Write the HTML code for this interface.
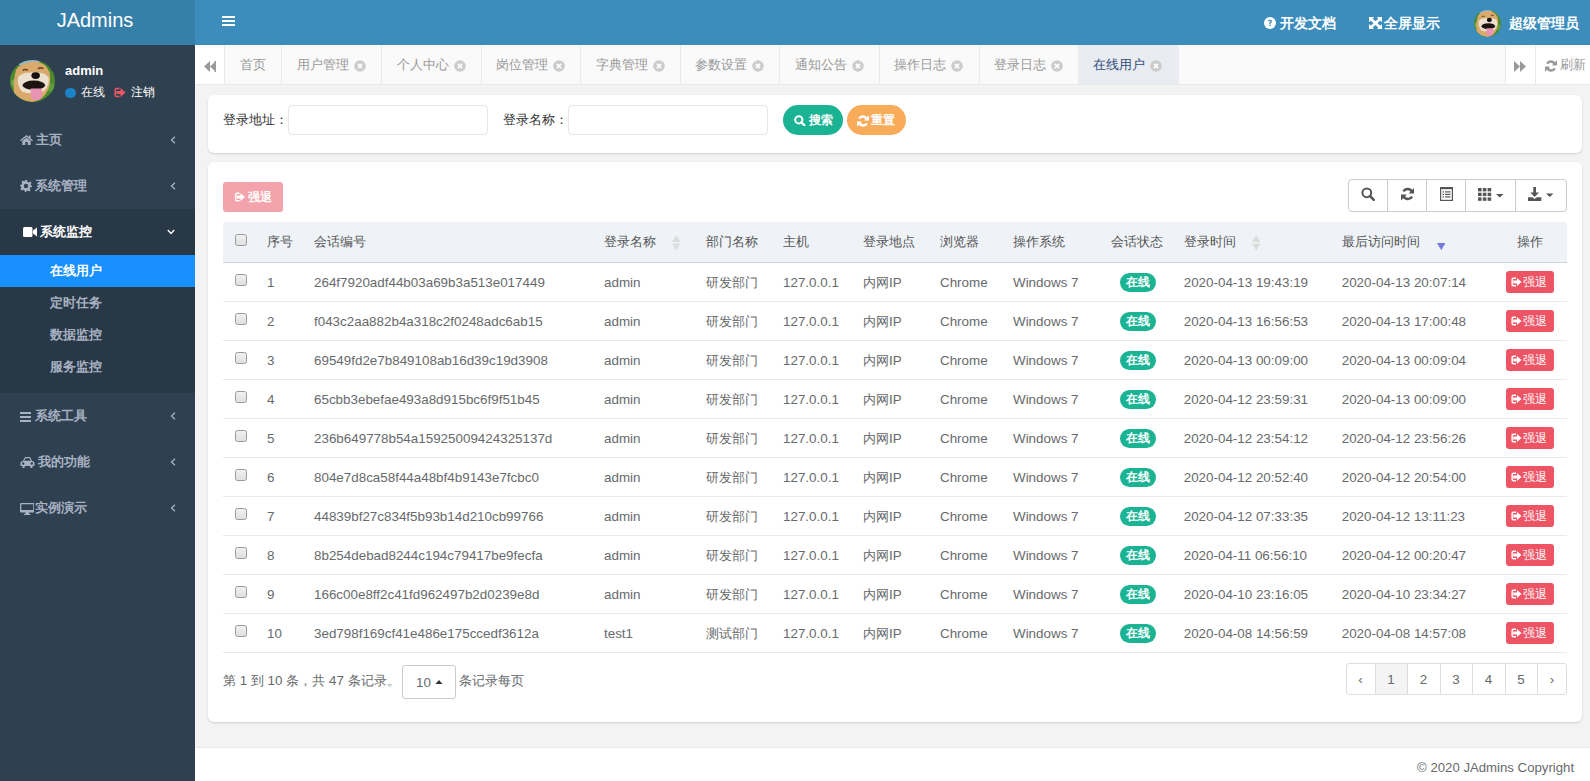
<!DOCTYPE html>
<html><head><meta charset="utf-8">
<style>
*{box-sizing:border-box;margin:0;padding:0}
html,body{width:1590px;height:781px;overflow:hidden}
body{font-family:"Liberation Sans",sans-serif;background:#f3f3f4;position:relative;color:#676a6c;font-size:13px}
.abs{position:absolute}
.logo{left:0;top:0;width:195px;height:45px;background:#367fa9;color:#fff;font-size:20px;line-height:41px;text-align:center;padding-right:5px}
.header{left:195px;top:0;width:1395px;height:45px;background:#3c8dbc;color:#fff}
.sidebar{left:0;top:45px;width:195px;height:736px;background:#2f4050}
.nav-item{position:absolute;left:0;width:195px;height:46px;color:#a7b1c2;font-weight:bold;font-size:13px}
.nav-item .txt{position:absolute;top:0;line-height:46px}
.sub{left:50px;width:145px;height:32px;line-height:32px;color:#a7b1c2;font-weight:bold;font-size:13px}
.tabs{left:195px;top:45px;width:1395px;height:40px;background:#fafafa;border-bottom:1px solid #e7eaec}
.tab{position:absolute;top:0;height:39px;border-right:1px solid #e7eaec;color:#999;line-height:39px;font-size:13px}
.htxt{top:14px;font-size:14px;font-weight:bold;line-height:18px;color:#fff;white-space:nowrap}
.ttxt{top:12px;font-size:13px;line-height:16px;color:#999;white-space:nowrap}
.lbl{top:17px;font-size:13px;line-height:16px;color:#333;white-space:nowrap}
.inp{top:10px;width:199.5px;height:30px;border:1px solid #e5e6e7;border-radius:4px;background:#fff}
.pill{top:10px;height:30px;border-radius:15px}
.ptxt{top:7px;font-size:12px;line-height:16px;color:#fff;font-weight:bold;white-space:nowrap}
.dbtn{border-radius:3px}
.tb{border:1px solid #ccc;border-radius:4px}
.cbx{width:12px;height:12px;border:1px solid #9a9a9a;border-radius:2.5px;background:linear-gradient(#f0f0f0,#e0e0e0)}
.th{font-size:13px;line-height:16px;color:#555;white-space:nowrap}
.td{font-size:13.4px;line-height:18px;color:#676a6c;white-space:nowrap}
.badge{width:36px;height:19px;border-radius:9.5px;background:#1ab394;color:#fff;font-weight:bold;font-size:12px;line-height:19px;text-align:center}
.rbtn{width:48px;height:22px;border-radius:3px;background:#ed5565}
.card{background:#fff;border-radius:6px;box-shadow:0 1px 2px rgba(0,0,0,.15)}
.footer{left:195px;top:747px;width:1395px;height:34px;background:#fff;border-top:1px solid #e7eaec}
</style></head><body>
<div class="abs logo">JAdmins</div>
<div class="abs header">
 <svg class="abs" style="left:27px;top:16px" width="13" height="10" viewBox="0 0 13 10"><rect y="0" width="13" height="2" fill="#fff"/><rect y="4" width="13" height="2" fill="#fff"/><rect y="8" width="13" height="2" fill="#fff"/></svg>
 <svg class="abs" style="left:1069px;top:16.5px" width="12" height="12" viewBox="0 0 12 12"><circle cx="6" cy="6" r="6" fill="#fff"/><path d="M4 4.6 Q4 2.6 6 2.6 Q8 2.6 8 4.3 Q8 5.3 6.9 5.9 Q6.6 6.1 6.6 6.9 H5.3 Q5.2 5.6 6 5.1 Q6.7 4.7 6.7 4.3 Q6.7 3.7 6 3.7 Q5.3 3.7 5.3 4.6 Z" fill="#3c8dbc"/><rect x="5.3" y="7.6" width="1.4" height="1.5" fill="#3c8dbc"/></svg>
 <div class="abs htxt" style="left:1085px">开发文档</div>
 <svg class="abs" style="left:1173.7px;top:16.8px" width="13" height="12.2" viewBox="0 0 13 12.2"><path d="M0 0 H5.3 L0 5.3 Z M13 0 V5.3 L7.7 0 Z M13 12.2 H7.7 L13 6.9 Z M0 12.2 V6.9 L5.3 12.2 Z" fill="#fff"/><path d="M1.5 1.5 L11.5 10.7 M11.5 1.5 L1.5 10.7" stroke="#fff" stroke-width="2.7"/></svg>
 <div class="abs htxt" style="left:1189px">全屏显示</div>
 <svg class="abs" style="left:1278.8px;top:10px" width="27" height="27" viewBox="0 0 100 100">
  <defs><clipPath id="av2"><circle cx="50" cy="50" r="50"/></clipPath></defs>
  <g clip-path="url(#av2)">
   <rect width="100" height="100" fill="#4d8a2c"/>
   <circle cx="12" cy="55" r="10" fill="#6aa84a"/><circle cx="90" cy="65" r="10" fill="#5f9e3c"/>
   <rect x="20" y="0" width="45" height="12" fill="#86b8e0"/>
   <path d="M14 22 Q26 4 55 3 Q80 6 88 30 Q92 55 84 72 Q76 94 50 100 Q22 98 9 78 Q6 50 14 22 Z" fill="#d9aa6c"/>
   <path d="M18 40 Q30 28 52 30 Q78 28 86 42 Q88 62 76 74 Q52 84 28 76 Q14 62 18 40 Z" fill="#ece0cf"/>
   <path d="M28 25 q6 -5 12 0 M62 21 q6 -5 12 0" stroke="#6a4420" stroke-width="3.5" fill="none"/>
   <ellipse cx="57" cy="37" rx="9.5" ry="8" fill="#141010"/>
   <ellipse cx="53" cy="60" rx="25" ry="11" fill="#1c1410"/>
   <path d="M46 68 H71 V84 Q71 96 58.5 96 Q46 96 46 84 Z" fill="#e993b4"/>
  </g>
 </svg>
 <div class="abs htxt" style="left:1314px">超级管理员</div>
</div>
<div class="abs sidebar">
 <svg class="abs" style="left:10px;top:15px" width="45" height="42" viewBox="0 0 100 100" preserveAspectRatio="none">
  <defs><clipPath id="av"><circle cx="50" cy="50" r="50"/></clipPath></defs>
  <g clip-path="url(#av)">
   <rect width="100" height="100" fill="#4d8a2c"/>
   <circle cx="12" cy="55" r="10" fill="#6aa84a"/><circle cx="90" cy="65" r="10" fill="#5f9e3c"/>
   <rect x="20" y="0" width="45" height="12" fill="#86b8e0"/>
   <path d="M14 22 Q26 4 55 3 Q80 6 88 30 Q92 55 84 72 Q76 94 50 100 Q22 98 9 78 Q6 50 14 22 Z" fill="#d9aa6c"/>
   <path d="M18 40 Q30 28 52 30 Q78 28 86 42 Q88 62 76 74 Q52 84 28 76 Q14 62 18 40 Z" fill="#ece0cf"/>
   <path d="M28 25 q6 -5 12 0 M62 21 q6 -5 12 0" stroke="#6a4420" stroke-width="3.5" fill="none"/>
   <ellipse cx="57" cy="37" rx="9.5" ry="8" fill="#141010"/>
   <ellipse cx="53" cy="60" rx="25" ry="11" fill="#1c1410"/>
   <path d="M46 68 H71 V84 Q71 96 58.5 96 Q46 96 46 84 Z" fill="#e993b4"/>
  </g>
 </svg>
 <div class="abs" style="left:65px;top:18px;color:#fff;font-weight:bold;font-size:13px;line-height:15px">admin</div>
 <div class="abs" style="left:65px;top:42.5px;width:10.5px;height:10.5px;border-radius:50%;background:#1c84c6"></div>
 <div class="abs" style="left:81px;top:39px;color:#fff;font-size:12px;line-height:16px">在线</div>
 <svg class="abs" style="left:113.5px;top:42px" width="12" height="11" viewBox="0 0 12 11"><path d="M5.5 1.4 H2.5 Q1.2 1.4 1.2 2.7 V8.3 Q1.2 9.6 2.5 9.6 H5.5" stroke="#ed5565" stroke-width="1.5" fill="none"/><path d="M2.4 3.9 H6.5 V1 L11.5 5.5 L6.5 10 V7.1 H2.4 Z" fill="#ed5565"/></svg>
 <div class="abs" style="left:131px;top:39px;color:#fff;font-size:12px;line-height:16px">注销</div>

 <div class="nav-item" style="top:71.5px">
  <svg class="abs" style="left:20px;top:18px" width="13" height="10" viewBox="0 0 13 10"><path d="M6.5 0 L0 5.3 L1 6.3 L6.5 1.8 L12 6.3 L13 5.3 L10.5 3.2 V0.5 H9 V2 Z M2.3 6 V10 H5.3 V7 H7.7 V10 H10.7 V6 L6.5 2.6 Z" fill="#a7b1c2"/></svg>
  <div class="txt" style="left:36px">主页</div>
  <svg class="abs" style="left:170px;top:19px" width="6" height="8" viewBox="0 0 6 8"><path d="M5 0.8 L1.5 4 L5 7.2" stroke="#a7b1c2" stroke-width="1.3" fill="none"/></svg>
 </div>
 <div class="nav-item" style="top:118px">
  <svg class="abs" style="left:20px;top:17px" width="12" height="12" viewBox="0 0 12 12"><path d="M5 0 H7 L7.4 1.8 L8.7 2.4 L10.3 1.4 L11.6 2.7 L10.6 4.3 L11.2 5.6 L12 5.9 V7.1 L10.2 7.5 L9.7 8.7 L10.6 10.3 L9.3 11.6 L7.7 10.6 L6.5 11.1 L6.1 12 H4.9 L4.5 10.2 L3.3 9.7 L1.7 10.6 L0.4 9.3 L1.4 7.7 L0.9 6.5 L0 6.1 V4.9 L1.8 4.5 L2.3 3.3 L1.4 1.7 L2.7 0.4 L4.3 1.4 L4.6 1.2 Z M6 3.8 A2.2 2.2 0 1 0 6 8.2 A2.2 2.2 0 1 0 6 3.8 Z" fill="#a7b1c2" fill-rule="evenodd"/></svg>
  <div class="txt" style="left:35px">系统管理</div>
  <svg class="abs" style="left:170px;top:19px" width="6" height="8" viewBox="0 0 6 8"><path d="M5 0.8 L1.5 4 L5 7.2" stroke="#a7b1c2" stroke-width="1.3" fill="none"/></svg>
 </div>
 <div class="abs" style="left:0;top:164px;width:195px;height:184px;background:#293846"></div>
 <div class="nav-item" style="top:164px;color:#fff">
  <svg class="abs" style="left:22.5px;top:18px" width="14" height="10" viewBox="0 0 14 10"><rect x="0" y="0" width="9.5" height="10" rx="1.5" fill="#fff"/><path d="M10 3.5 L14 0.5 V9.5 L10 6.5 Z" fill="#fff"/></svg>
  <div class="txt" style="left:39.5px">系统监控</div>
  <svg class="abs" style="left:167px;top:20px" width="8" height="6" viewBox="0 0 8 6"><path d="M0.8 1 L4 4.5 L7.2 1" stroke="#fff" stroke-width="1.3" fill="none"/></svg>
 </div>
 <div class="abs" style="left:0;top:210px;width:195px;height:32px;background:#1890ff"></div>
 <div class="abs sub" style="top:210px;color:#fff">在线用户</div>
 <div class="abs sub" style="top:242px">定时任务</div>
 <div class="abs sub" style="top:274px">数据监控</div>
 <div class="abs sub" style="top:306px">服务监控</div>

 <div class="nav-item" style="top:348px">
  <svg class="abs" style="left:19.7px;top:18.5px" width="11.5" height="10" viewBox="0 0 11.5 10"><rect y="0" width="11.5" height="2" fill="#a7b1c2"/><rect y="4" width="11.5" height="2" fill="#a7b1c2"/><rect y="8" width="11.5" height="2" fill="#a7b1c2"/></svg>
  <div class="txt" style="left:34.6px">系统工具</div>
  <svg class="abs" style="left:170px;top:19px" width="6" height="8" viewBox="0 0 6 8"><path d="M5 0.8 L1.5 4 L5 7.2" stroke="#a7b1c2" stroke-width="1.3" fill="none"/></svg>
 </div>
 <div class="nav-item" style="top:394px">
  <svg class="abs" style="left:19.7px;top:17.5px" width="15" height="11" viewBox="0 0 15 11"><path d="M3 4 L4.5 0.8 Q4.8 0 5.6 0 H9.4 Q10.2 0 10.5 0.8 L12 4 Q14 4.3 14.5 5.5 V9 H12.5 V10.5 Q12.5 11 12 11 H10.8 Q10.3 11 10.3 10.5 V9 H4.7 V10.5 Q4.7 11 4.2 11 H3 Q2.5 11 2.5 10.5 V9 H0.5 V5.5 Q1 4.3 3 4 Z M4.3 3.8 H10.7 L9.6 1.3 H5.4 Z M3.2 5.3 A1.2 1.2 0 1 0 3.2 7.7 A1.2 1.2 0 1 0 3.2 5.3 Z M11.8 5.3 A1.2 1.2 0 1 0 11.8 7.7 A1.2 1.2 0 1 0 11.8 5.3 Z" fill="#a7b1c2" fill-rule="evenodd"/></svg>
  <div class="txt" style="left:38.3px">我的功能</div>
  <svg class="abs" style="left:170px;top:19px" width="6" height="8" viewBox="0 0 6 8"><path d="M5 0.8 L1.5 4 L5 7.2" stroke="#a7b1c2" stroke-width="1.3" fill="none"/></svg>
 </div>
 <div class="nav-item" style="top:440px">
  <svg class="abs" style="left:19.7px;top:17.5px" width="14.5" height="12" viewBox="0 0 14.5 12"><path d="M1 0 H13.5 Q14.5 0 14.5 1 V8.5 Q14.5 9.5 13.5 9.5 H9 L9.3 11 H10.5 V12 H4 V11 H5.2 L5.5 9.5 H1 Q0 9.5 0 8.5 V1 Q0 0 1 0 Z M1.3 1.3 V7 H13.2 V1.3 Z" fill="#a7b1c2" fill-rule="evenodd"/></svg>
  <div class="txt" style="left:34.6px">实例演示</div>
  <svg class="abs" style="left:170px;top:19px" width="6" height="8" viewBox="0 0 6 8"><path d="M5 0.8 L1.5 4 L5 7.2" stroke="#a7b1c2" stroke-width="1.3" fill="none"/></svg>
 </div>
</div>
<div class="abs tabs">
<div class="abs" style="left:0;top:0;width:30px;height:39px;background:#fff;border-right:1px solid #e7eaec"></div>
<svg class="abs" style="left:9px;top:16px" width="12" height="11" viewBox="0 0 12 11"><path d="M6 0 V11 L0 5.5 Z M12 0 V11 L6 5.5 Z" fill="#999"/><rect x="10.6" y="0" width="1.4" height="11" fill="#999"/></svg>
<div class="tab" style="left:30.0px;width:57.0px;"></div>
<div class="abs ttxt" style="left:44.6px;">首页</div>
<div class="tab" style="left:87.0px;width:100.0px;"></div>
<div class="abs ttxt" style="left:101.6px;">用户管理</div>
<svg class="abs" style="left:158.6px;top:15px" width="12" height="12" viewBox="0 0 12 12"><circle cx="6" cy="6" r="5.8" fill="#ccc"/><path d="M3.9 3.9 L8.1 8.1 M8.1 3.9 L3.9 8.1" stroke="#fff" stroke-width="1.6"/></svg>
<div class="tab" style="left:187.0px;width:99.7px;"></div>
<div class="abs ttxt" style="left:201.6px;">个人中心</div>
<svg class="abs" style="left:258.6px;top:15px" width="12" height="12" viewBox="0 0 12 12"><circle cx="6" cy="6" r="5.8" fill="#ccc"/><path d="M3.9 3.9 L8.1 8.1 M8.1 3.9 L3.9 8.1" stroke="#fff" stroke-width="1.6"/></svg>
<div class="tab" style="left:286.7px;width:99.3px;"></div>
<div class="abs ttxt" style="left:301.3px;">岗位管理</div>
<svg class="abs" style="left:358.3px;top:15px" width="12" height="12" viewBox="0 0 12 12"><circle cx="6" cy="6" r="5.8" fill="#ccc"/><path d="M3.9 3.9 L8.1 8.1 M8.1 3.9 L3.9 8.1" stroke="#fff" stroke-width="1.6"/></svg>
<div class="tab" style="left:386.0px;width:99.6px;"></div>
<div class="abs ttxt" style="left:400.6px;">字典管理</div>
<svg class="abs" style="left:457.6px;top:15px" width="12" height="12" viewBox="0 0 12 12"><circle cx="6" cy="6" r="5.8" fill="#ccc"/><path d="M3.9 3.9 L8.1 8.1 M8.1 3.9 L3.9 8.1" stroke="#fff" stroke-width="1.6"/></svg>
<div class="tab" style="left:485.6px;width:99.4px;"></div>
<div class="abs ttxt" style="left:500.2px;">参数设置</div>
<svg class="abs" style="left:557.2px;top:15px" width="12" height="12" viewBox="0 0 12 12"><circle cx="6" cy="6" r="5.8" fill="#ccc"/><path d="M3.9 3.9 L8.1 8.1 M8.1 3.9 L3.9 8.1" stroke="#fff" stroke-width="1.6"/></svg>
<div class="tab" style="left:585.0px;width:99.6px;"></div>
<div class="abs ttxt" style="left:599.6px;">通知公告</div>
<svg class="abs" style="left:656.6px;top:15px" width="12" height="12" viewBox="0 0 12 12"><circle cx="6" cy="6" r="5.8" fill="#ccc"/><path d="M3.9 3.9 L8.1 8.1 M8.1 3.9 L3.9 8.1" stroke="#fff" stroke-width="1.6"/></svg>
<div class="tab" style="left:684.6px;width:100.0px;"></div>
<div class="abs ttxt" style="left:699.2px;">操作日志</div>
<svg class="abs" style="left:756.2px;top:15px" width="12" height="12" viewBox="0 0 12 12"><circle cx="6" cy="6" r="5.8" fill="#ccc"/><path d="M3.9 3.9 L8.1 8.1 M8.1 3.9 L3.9 8.1" stroke="#fff" stroke-width="1.6"/></svg>
<div class="tab" style="left:784.6px;width:99.0px;"></div>
<div class="abs ttxt" style="left:799.2px;">登录日志</div>
<svg class="abs" style="left:856.2px;top:15px" width="12" height="12" viewBox="0 0 12 12"><circle cx="6" cy="6" r="5.8" fill="#ccc"/><path d="M3.9 3.9 L8.1 8.1 M8.1 3.9 L3.9 8.1" stroke="#fff" stroke-width="1.6"/></svg>
<div class="tab" style="left:883.6px;width:100.0px;background:#e9edf2;"></div>
<div class="abs ttxt" style="left:898.2px;color:#2f4b7c;">在线用户</div>
<svg class="abs" style="left:955.2px;top:15px" width="12" height="12" viewBox="0 0 12 12"><circle cx="6" cy="6" r="5.8" fill="#ccc"/><path d="M3.9 3.9 L8.1 8.1 M8.1 3.9 L3.9 8.1" stroke="#fff" stroke-width="1.6"/></svg>
<div class="abs" style="left:1310px;top:0;width:85px;height:39px;background:#fff;border-left:1px solid #e7eaec"></div>
<div class="abs" style="left:1340px;top:0;width:1px;height:39px;background:#e7eaec"></div>
<svg class="abs" style="left:1319px;top:16px" width="12" height="11" viewBox="0 0 12 11"><path d="M0 0 V11 L6 5.5 Z M6 0 V11 L12 5.5 Z" fill="#999"/></svg>
<svg class="abs" style="left:1350px;top:14.5px" width="12" height="12" viewBox="0 0 12 12"><path d="M9.9 4.6 A4.3 4.3 0 0 0 2.1 3.6" stroke="#999" stroke-width="2.4" fill="none"/><path d="M12 0.3 V5.5 H6.8 Z" fill="#999"/><path d="M2.1 7.4 A4.3 4.3 0 0 0 9.9 8.4" stroke="#999" stroke-width="2.4" fill="none"/><path d="M0 11.7 V6.5 H5.2 Z" fill="#999"/></svg>
<div class="abs ttxt" style="left:1365px">刷新</div>
</div>
<div class="abs card" style="left:208px;top:95px;width:1374px;height:58px">
 <div class="abs lbl" style="left:14.5px">登录地址：</div>
 <div class="abs inp" style="left:80px"></div>
 <div class="abs lbl" style="left:294.5px">登录名称：</div>
 <div class="abs inp" style="left:360px"></div>
 <div class="abs pill" style="left:575px;width:60px;background:#1ab394">
  <svg class="abs" style="left:11px;top:9.5px" width="12" height="11" viewBox="0 0 12 11"><circle cx="4.8" cy="4.8" r="3.6" stroke="#fff" stroke-width="2" fill="none"/><path d="M7.3 7.3 L10.5 10.3" stroke="#fff" stroke-width="2.3" stroke-linecap="round"/></svg>
  <div class="abs ptxt" style="left:25.5px">搜索</div>
 </div>
 <div class="abs pill" style="left:639px;width:59px;background:#f8ac59">
  <svg class="abs" style="left:9.5px;top:9.5px" width="12" height="12" viewBox="0 0 12 12"><path d="M9.9 4.6 A4.3 4.3 0 0 0 2.1 3.6" stroke="#fff" stroke-width="2.4" fill="none"/><path d="M12 0.3 V5.5 H6.8 Z" fill="#fff"/><path d="M2.1 7.4 A4.3 4.3 0 0 0 9.9 8.4" stroke="#fff" stroke-width="2.4" fill="none"/><path d="M0 11.7 V6.5 H5.2 Z" fill="#fff"/></svg>
  <div class="abs ptxt" style="left:24px">重置</div>
 </div>
</div>
<div class="abs card" style="left:208px;top:162px;width:1374px;height:560px">
<div class="abs dbtn" style="left:15px;top:20px;width:60px;height:30px;background:#f3a3ab"><svg class="abs" style="left:11px;top:10px" width="12" height="10" viewBox="0 0 12 11"><path d="M5.5 1.4 H2.5 Q1.2 1.4 1.2 2.7 V8.3 Q1.2 9.6 2.5 9.6 H5.5" stroke="#fff" stroke-width="1.6" fill="none"/><path d="M2.4 3.9 H6.5 V1 L11.5 5.5 L6.5 10 V7.1 H2.4 Z" fill="#fff"/></svg><div class="abs" style="left:25px;top:6.5px;font-size:12px;font-weight:bold;line-height:16px;color:#fff">强退</div></div>
<div class="abs tb" style="left:1140px;top:16.5px;width:218.5px;height:33px"></div>
<div class="abs" style="left:1179px;top:17px;width:1px;height:32px;background:#ccc"></div>
<div class="abs" style="left:1218px;top:17px;width:1px;height:32px;background:#ccc"></div>
<div class="abs" style="left:1257px;top:17px;width:1px;height:32px;background:#ccc"></div>
<div class="abs" style="left:1307px;top:17px;width:1px;height:32px;background:#ccc"></div>
<svg class="abs" style="left:1153px;top:25px" width="14" height="14" viewBox="0 0 14 14"><circle cx="5.8" cy="5.8" r="4.4" stroke="#555" stroke-width="2" fill="none"/><path d="M9 9 L12.8 12.8" stroke="#555" stroke-width="2.5" stroke-linecap="round"/></svg>
<svg class="abs" style="left:1192.5px;top:25px" width="13.5" height="14" viewBox="0 0 12 12"><path d="M9.9 4.6 A4.3 4.3 0 0 0 2.1 3.6" stroke="#555" stroke-width="2.1" fill="none"/><path d="M12 0.3 V5.5 H6.8 Z" fill="#555"/><path d="M2.1 7.4 A4.3 4.3 0 0 0 9.9 8.4" stroke="#555" stroke-width="2.1" fill="none"/><path d="M0 11.7 V6.5 H5.2 Z" fill="#555"/></svg>
<svg class="abs" style="left:1232px;top:25px" width="13" height="14" viewBox="0 0 13 14"><rect x="0.6" y="0.6" width="11.8" height="12.8" stroke="#555" stroke-width="1.2" fill="none"/><rect x="0.6" y="0.6" width="11.8" height="1.6" fill="#555"/><rect x="2.5" y="4.3" width="1.5" height="1.2" fill="#555"/><rect x="5" y="4.3" width="5.5" height="1.2" fill="#555"/><rect x="2.5" y="6.8" width="1.5" height="1.2" fill="#555"/><rect x="5" y="6.8" width="5.5" height="1.2" fill="#555"/><rect x="2.5" y="9.3" width="1.5" height="1.2" fill="#555"/><rect x="5" y="9.3" width="5.5" height="1.2" fill="#555"/></svg>
<svg class="abs" style="left:1269.5px;top:26px" width="27" height="13" viewBox="0 0 27 13"><g fill="#555"><rect x="0" y="0" width="3.6" height="3.4"/><rect x="4.8" y="0" width="3.6" height="3.4"/><rect x="9.6" y="0" width="3.6" height="3.4"/><rect x="0" y="4.7" width="3.6" height="3.4"/><rect x="4.8" y="4.7" width="3.6" height="3.4"/><rect x="9.6" y="4.7" width="3.6" height="3.4"/><rect x="0" y="9.4" width="3.6" height="3.4"/><rect x="4.8" y="9.4" width="3.6" height="3.4"/><rect x="9.6" y="9.4" width="3.6" height="3.4"/><path d="M18 6 H25.5 L21.75 9.6 Z"/></g></svg>
<svg class="abs" style="left:1320px;top:25px" width="27" height="14" viewBox="0 0 27 14"><g fill="#555"><path d="M5.3 0 H8 V5.5 H11 L6.65 10 L2.3 5.5 H5.3 Z"/><path d="M0 10.3 H4.5 L6.65 12 L8.8 10.3 H13.3 V14 H0 Z"/><path d="M18 6.5 H25.5 L21.75 10.1 Z"/></g></svg>
<div class="abs" style="left:15px;top:60px;width:1344px;height:40px;background:#eff3f8;border-radius:3px 3px 0 0"></div>
<div class="abs" style="left:15px;top:100px;width:1344px;height:1px;background:#cfd3d7"></div>
<div class="abs cbx" style="left:27px;top:72px"></div>
<div class="abs th" style="left:59px;top:72px">序号</div>
<div class="abs th" style="left:106px;top:72px">会话编号</div>
<div class="abs th" style="left:396px;top:72px">登录名称</div>
<div class="abs th" style="left:498px;top:72px">部门名称</div>
<div class="abs th" style="left:575px;top:72px">主机</div>
<div class="abs th" style="left:655px;top:72px">登录地点</div>
<div class="abs th" style="left:732px;top:72px">浏览器</div>
<div class="abs th" style="left:805px;top:72px">操作系统</div>
<div class="abs th" style="left:903.4px;top:72px">会话状态</div>
<div class="abs th" style="left:975.7px;top:72px">登录时间</div>
<div class="abs th" style="left:1133.7px;top:72px">最后访问时间</div>
<div class="abs th" style="left:1308.8px;top:72px">操作</div>
<svg class="abs" style="left:464.3px;top:72.5px" width="8.5" height="16" viewBox="0 0 8.5 16"><path d="M4.25 0 L8.5 7 H0 Z M0 8.5 H8.5 L4.25 15.5 Z" fill="#dcdcdc"/></svg>
<svg class="abs" style="left:1044.3px;top:72.5px" width="8.5" height="16" viewBox="0 0 8.5 16"><path d="M4.25 0 L8.5 7 H0 Z M0 8.5 H8.5 L4.25 15.5 Z" fill="#dcdcdc"/></svg>
<svg class="abs" style="left:1228.5px;top:80.8px" width="8.5" height="7.2" viewBox="0 0 8.5 7.2"><path d="M0 0 H8.5 L4.25 7.2 Z" fill="#7678e0"/></svg>
<div class="abs cbx" style="left:27px;top:111.5px"></div>
<div class="abs td" style="left:59px;top:112px">1</div>
<div class="abs td" style="left:106px;top:112px">264f7920adf44b03a69b3a513e017449</div>
<div class="abs td" style="left:396px;top:112px">admin</div>
<div class="abs td" style="left:498px;top:112px">研发部门</div>
<div class="abs td" style="left:575px;top:112px">127.0.0.1</div>
<div class="abs td" style="left:655px;top:112px">内网IP</div>
<div class="abs td" style="left:732px;top:112px">Chrome</div>
<div class="abs td" style="left:805px;top:112px">Windows 7</div>
<div class="abs td" style="left:975.7px;top:112px">2020-04-13 19:43:19</div>
<div class="abs td" style="left:1133.7px;top:112px">2020-04-13 20:07:14</div>
<div class="abs badge" style="left:911.6px;top:110.5px">在线</div>
<div class="abs rbtn" style="left:1298px;top:109px"><svg class="abs" style="left:5px;top:6px" width="11" height="10" viewBox="0 0 12 11"><path d="M5.5 1.4 H2.5 Q1.2 1.4 1.2 2.7 V8.3 Q1.2 9.6 2.5 9.6 H5.5" stroke="#fff" stroke-width="1.6" fill="none"/><path d="M2.4 3.9 H6.5 V1 L11.5 5.5 L6.5 10 V7.1 H2.4 Z" fill="#fff"/></svg><div class="abs" style="left:16.5px;top:3px;font-size:12px;line-height:16px;color:#fff">强退</div></div>
<div class="abs" style="left:15px;top:139px;width:1344px;height:1px;background:#e7eaec"></div>
<div class="abs cbx" style="left:27px;top:150.5px"></div>
<div class="abs td" style="left:59px;top:151px">2</div>
<div class="abs td" style="left:106px;top:151px">f043c2aa882b4a318c2f0248adc6ab15</div>
<div class="abs td" style="left:396px;top:151px">admin</div>
<div class="abs td" style="left:498px;top:151px">研发部门</div>
<div class="abs td" style="left:575px;top:151px">127.0.0.1</div>
<div class="abs td" style="left:655px;top:151px">内网IP</div>
<div class="abs td" style="left:732px;top:151px">Chrome</div>
<div class="abs td" style="left:805px;top:151px">Windows 7</div>
<div class="abs td" style="left:975.7px;top:151px">2020-04-13 16:56:53</div>
<div class="abs td" style="left:1133.7px;top:151px">2020-04-13 17:00:48</div>
<div class="abs badge" style="left:911.6px;top:149.5px">在线</div>
<div class="abs rbtn" style="left:1298px;top:148px"><svg class="abs" style="left:5px;top:6px" width="11" height="10" viewBox="0 0 12 11"><path d="M5.5 1.4 H2.5 Q1.2 1.4 1.2 2.7 V8.3 Q1.2 9.6 2.5 9.6 H5.5" stroke="#fff" stroke-width="1.6" fill="none"/><path d="M2.4 3.9 H6.5 V1 L11.5 5.5 L6.5 10 V7.1 H2.4 Z" fill="#fff"/></svg><div class="abs" style="left:16.5px;top:3px;font-size:12px;line-height:16px;color:#fff">强退</div></div>
<div class="abs" style="left:15px;top:178px;width:1344px;height:1px;background:#e7eaec"></div>
<div class="abs cbx" style="left:27px;top:189.5px"></div>
<div class="abs td" style="left:59px;top:190px">3</div>
<div class="abs td" style="left:106px;top:190px">69549fd2e7b849108ab16d39c19d3908</div>
<div class="abs td" style="left:396px;top:190px">admin</div>
<div class="abs td" style="left:498px;top:190px">研发部门</div>
<div class="abs td" style="left:575px;top:190px">127.0.0.1</div>
<div class="abs td" style="left:655px;top:190px">内网IP</div>
<div class="abs td" style="left:732px;top:190px">Chrome</div>
<div class="abs td" style="left:805px;top:190px">Windows 7</div>
<div class="abs td" style="left:975.7px;top:190px">2020-04-13 00:09:00</div>
<div class="abs td" style="left:1133.7px;top:190px">2020-04-13 00:09:04</div>
<div class="abs badge" style="left:911.6px;top:188.5px">在线</div>
<div class="abs rbtn" style="left:1298px;top:187px"><svg class="abs" style="left:5px;top:6px" width="11" height="10" viewBox="0 0 12 11"><path d="M5.5 1.4 H2.5 Q1.2 1.4 1.2 2.7 V8.3 Q1.2 9.6 2.5 9.6 H5.5" stroke="#fff" stroke-width="1.6" fill="none"/><path d="M2.4 3.9 H6.5 V1 L11.5 5.5 L6.5 10 V7.1 H2.4 Z" fill="#fff"/></svg><div class="abs" style="left:16.5px;top:3px;font-size:12px;line-height:16px;color:#fff">强退</div></div>
<div class="abs" style="left:15px;top:217px;width:1344px;height:1px;background:#e7eaec"></div>
<div class="abs cbx" style="left:27px;top:228.5px"></div>
<div class="abs td" style="left:59px;top:229px">4</div>
<div class="abs td" style="left:106px;top:229px">65cbb3ebefae493a8d915bc6f9f51b45</div>
<div class="abs td" style="left:396px;top:229px">admin</div>
<div class="abs td" style="left:498px;top:229px">研发部门</div>
<div class="abs td" style="left:575px;top:229px">127.0.0.1</div>
<div class="abs td" style="left:655px;top:229px">内网IP</div>
<div class="abs td" style="left:732px;top:229px">Chrome</div>
<div class="abs td" style="left:805px;top:229px">Windows 7</div>
<div class="abs td" style="left:975.7px;top:229px">2020-04-12 23:59:31</div>
<div class="abs td" style="left:1133.7px;top:229px">2020-04-13 00:09:00</div>
<div class="abs badge" style="left:911.6px;top:227.5px">在线</div>
<div class="abs rbtn" style="left:1298px;top:226px"><svg class="abs" style="left:5px;top:6px" width="11" height="10" viewBox="0 0 12 11"><path d="M5.5 1.4 H2.5 Q1.2 1.4 1.2 2.7 V8.3 Q1.2 9.6 2.5 9.6 H5.5" stroke="#fff" stroke-width="1.6" fill="none"/><path d="M2.4 3.9 H6.5 V1 L11.5 5.5 L6.5 10 V7.1 H2.4 Z" fill="#fff"/></svg><div class="abs" style="left:16.5px;top:3px;font-size:12px;line-height:16px;color:#fff">强退</div></div>
<div class="abs" style="left:15px;top:256px;width:1344px;height:1px;background:#e7eaec"></div>
<div class="abs cbx" style="left:27px;top:267.5px"></div>
<div class="abs td" style="left:59px;top:268px">5</div>
<div class="abs td" style="left:106px;top:268px">236b649778b54a15925009424325137d</div>
<div class="abs td" style="left:396px;top:268px">admin</div>
<div class="abs td" style="left:498px;top:268px">研发部门</div>
<div class="abs td" style="left:575px;top:268px">127.0.0.1</div>
<div class="abs td" style="left:655px;top:268px">内网IP</div>
<div class="abs td" style="left:732px;top:268px">Chrome</div>
<div class="abs td" style="left:805px;top:268px">Windows 7</div>
<div class="abs td" style="left:975.7px;top:268px">2020-04-12 23:54:12</div>
<div class="abs td" style="left:1133.7px;top:268px">2020-04-12 23:56:26</div>
<div class="abs badge" style="left:911.6px;top:266.5px">在线</div>
<div class="abs rbtn" style="left:1298px;top:265px"><svg class="abs" style="left:5px;top:6px" width="11" height="10" viewBox="0 0 12 11"><path d="M5.5 1.4 H2.5 Q1.2 1.4 1.2 2.7 V8.3 Q1.2 9.6 2.5 9.6 H5.5" stroke="#fff" stroke-width="1.6" fill="none"/><path d="M2.4 3.9 H6.5 V1 L11.5 5.5 L6.5 10 V7.1 H2.4 Z" fill="#fff"/></svg><div class="abs" style="left:16.5px;top:3px;font-size:12px;line-height:16px;color:#fff">强退</div></div>
<div class="abs" style="left:15px;top:295px;width:1344px;height:1px;background:#e7eaec"></div>
<div class="abs cbx" style="left:27px;top:306.5px"></div>
<div class="abs td" style="left:59px;top:307px">6</div>
<div class="abs td" style="left:106px;top:307px">804e7d8ca58f44a48bf4b9143e7fcbc0</div>
<div class="abs td" style="left:396px;top:307px">admin</div>
<div class="abs td" style="left:498px;top:307px">研发部门</div>
<div class="abs td" style="left:575px;top:307px">127.0.0.1</div>
<div class="abs td" style="left:655px;top:307px">内网IP</div>
<div class="abs td" style="left:732px;top:307px">Chrome</div>
<div class="abs td" style="left:805px;top:307px">Windows 7</div>
<div class="abs td" style="left:975.7px;top:307px">2020-04-12 20:52:40</div>
<div class="abs td" style="left:1133.7px;top:307px">2020-04-12 20:54:00</div>
<div class="abs badge" style="left:911.6px;top:305.5px">在线</div>
<div class="abs rbtn" style="left:1298px;top:304px"><svg class="abs" style="left:5px;top:6px" width="11" height="10" viewBox="0 0 12 11"><path d="M5.5 1.4 H2.5 Q1.2 1.4 1.2 2.7 V8.3 Q1.2 9.6 2.5 9.6 H5.5" stroke="#fff" stroke-width="1.6" fill="none"/><path d="M2.4 3.9 H6.5 V1 L11.5 5.5 L6.5 10 V7.1 H2.4 Z" fill="#fff"/></svg><div class="abs" style="left:16.5px;top:3px;font-size:12px;line-height:16px;color:#fff">强退</div></div>
<div class="abs" style="left:15px;top:334px;width:1344px;height:1px;background:#e7eaec"></div>
<div class="abs cbx" style="left:27px;top:345.5px"></div>
<div class="abs td" style="left:59px;top:346px">7</div>
<div class="abs td" style="left:106px;top:346px">44839bf27c834f5b93b14d210cb99766</div>
<div class="abs td" style="left:396px;top:346px">admin</div>
<div class="abs td" style="left:498px;top:346px">研发部门</div>
<div class="abs td" style="left:575px;top:346px">127.0.0.1</div>
<div class="abs td" style="left:655px;top:346px">内网IP</div>
<div class="abs td" style="left:732px;top:346px">Chrome</div>
<div class="abs td" style="left:805px;top:346px">Windows 7</div>
<div class="abs td" style="left:975.7px;top:346px">2020-04-12 07:33:35</div>
<div class="abs td" style="left:1133.7px;top:346px">2020-04-12 13:11:23</div>
<div class="abs badge" style="left:911.6px;top:344.5px">在线</div>
<div class="abs rbtn" style="left:1298px;top:343px"><svg class="abs" style="left:5px;top:6px" width="11" height="10" viewBox="0 0 12 11"><path d="M5.5 1.4 H2.5 Q1.2 1.4 1.2 2.7 V8.3 Q1.2 9.6 2.5 9.6 H5.5" stroke="#fff" stroke-width="1.6" fill="none"/><path d="M2.4 3.9 H6.5 V1 L11.5 5.5 L6.5 10 V7.1 H2.4 Z" fill="#fff"/></svg><div class="abs" style="left:16.5px;top:3px;font-size:12px;line-height:16px;color:#fff">强退</div></div>
<div class="abs" style="left:15px;top:373px;width:1344px;height:1px;background:#e7eaec"></div>
<div class="abs cbx" style="left:27px;top:384.5px"></div>
<div class="abs td" style="left:59px;top:385px">8</div>
<div class="abs td" style="left:106px;top:385px">8b254debad8244c194c79417be9fecfa</div>
<div class="abs td" style="left:396px;top:385px">admin</div>
<div class="abs td" style="left:498px;top:385px">研发部门</div>
<div class="abs td" style="left:575px;top:385px">127.0.0.1</div>
<div class="abs td" style="left:655px;top:385px">内网IP</div>
<div class="abs td" style="left:732px;top:385px">Chrome</div>
<div class="abs td" style="left:805px;top:385px">Windows 7</div>
<div class="abs td" style="left:975.7px;top:385px">2020-04-11 06:56:10</div>
<div class="abs td" style="left:1133.7px;top:385px">2020-04-12 00:20:47</div>
<div class="abs badge" style="left:911.6px;top:383.5px">在线</div>
<div class="abs rbtn" style="left:1298px;top:382px"><svg class="abs" style="left:5px;top:6px" width="11" height="10" viewBox="0 0 12 11"><path d="M5.5 1.4 H2.5 Q1.2 1.4 1.2 2.7 V8.3 Q1.2 9.6 2.5 9.6 H5.5" stroke="#fff" stroke-width="1.6" fill="none"/><path d="M2.4 3.9 H6.5 V1 L11.5 5.5 L6.5 10 V7.1 H2.4 Z" fill="#fff"/></svg><div class="abs" style="left:16.5px;top:3px;font-size:12px;line-height:16px;color:#fff">强退</div></div>
<div class="abs" style="left:15px;top:412px;width:1344px;height:1px;background:#e7eaec"></div>
<div class="abs cbx" style="left:27px;top:423.5px"></div>
<div class="abs td" style="left:59px;top:424px">9</div>
<div class="abs td" style="left:106px;top:424px">166c00e8ff2c41fd962497b2d0239e8d</div>
<div class="abs td" style="left:396px;top:424px">admin</div>
<div class="abs td" style="left:498px;top:424px">研发部门</div>
<div class="abs td" style="left:575px;top:424px">127.0.0.1</div>
<div class="abs td" style="left:655px;top:424px">内网IP</div>
<div class="abs td" style="left:732px;top:424px">Chrome</div>
<div class="abs td" style="left:805px;top:424px">Windows 7</div>
<div class="abs td" style="left:975.7px;top:424px">2020-04-10 23:16:05</div>
<div class="abs td" style="left:1133.7px;top:424px">2020-04-10 23:34:27</div>
<div class="abs badge" style="left:911.6px;top:422.5px">在线</div>
<div class="abs rbtn" style="left:1298px;top:421px"><svg class="abs" style="left:5px;top:6px" width="11" height="10" viewBox="0 0 12 11"><path d="M5.5 1.4 H2.5 Q1.2 1.4 1.2 2.7 V8.3 Q1.2 9.6 2.5 9.6 H5.5" stroke="#fff" stroke-width="1.6" fill="none"/><path d="M2.4 3.9 H6.5 V1 L11.5 5.5 L6.5 10 V7.1 H2.4 Z" fill="#fff"/></svg><div class="abs" style="left:16.5px;top:3px;font-size:12px;line-height:16px;color:#fff">强退</div></div>
<div class="abs" style="left:15px;top:451px;width:1344px;height:1px;background:#e7eaec"></div>
<div class="abs cbx" style="left:27px;top:462.5px"></div>
<div class="abs td" style="left:59px;top:463px">10</div>
<div class="abs td" style="left:106px;top:463px">3ed798f169cf41e486e175ccedf3612a</div>
<div class="abs td" style="left:396px;top:463px">test1</div>
<div class="abs td" style="left:498px;top:463px">测试部门</div>
<div class="abs td" style="left:575px;top:463px">127.0.0.1</div>
<div class="abs td" style="left:655px;top:463px">内网IP</div>
<div class="abs td" style="left:732px;top:463px">Chrome</div>
<div class="abs td" style="left:805px;top:463px">Windows 7</div>
<div class="abs td" style="left:975.7px;top:463px">2020-04-08 14:56:59</div>
<div class="abs td" style="left:1133.7px;top:463px">2020-04-08 14:57:08</div>
<div class="abs badge" style="left:911.6px;top:461.5px">在线</div>
<div class="abs rbtn" style="left:1298px;top:460px"><svg class="abs" style="left:5px;top:6px" width="11" height="10" viewBox="0 0 12 11"><path d="M5.5 1.4 H2.5 Q1.2 1.4 1.2 2.7 V8.3 Q1.2 9.6 2.5 9.6 H5.5" stroke="#fff" stroke-width="1.6" fill="none"/><path d="M2.4 3.9 H6.5 V1 L11.5 5.5 L6.5 10 V7.1 H2.4 Z" fill="#fff"/></svg><div class="abs" style="left:16.5px;top:3px;font-size:12px;line-height:16px;color:#fff">强退</div></div>
<div class="abs" style="left:15px;top:490px;width:1344px;height:1px;background:#e7eaec"></div>
<div class="abs td" style="left:15px;top:509.5px">第 1 到 10 条，共 47 条记录。</div>
<div class="abs" style="left:194px;top:503px;width:53.5px;height:33.5px;border:1px solid #ccc;border-radius:3px;background:#fff"></div>
<div class="abs td" style="left:208px;top:511.5px">10</div>
<svg class="abs" style="left:227px;top:517.5px" width="8" height="4.5" viewBox="0 0 8 4.5"><path d="M0 4.5 L4 0 L8 4.5 Z" fill="#333"/></svg>
<div class="abs td" style="left:251px;top:509.5px">条记录每页</div>
<div class="abs" style="left:1138px;top:501px;width:221px;height:32px;border:1px solid #ddd;border-radius:3px;background:#fff"></div>
<div class="abs td" style="left:1138px;top:508.5px;width:29px;text-align:center">‹</div>
<div class="abs" style="left:1167px;top:502px;width:32px;height:30px;background:#f4f4f4"></div>
<div class="abs" style="left:1167px;top:501px;width:1px;height:32px;background:#ddd"></div>
<div class="abs td" style="left:1167px;top:508.5px;width:32px;text-align:center">1</div>
<div class="abs" style="left:1199px;top:501px;width:1px;height:32px;background:#ddd"></div>
<div class="abs td" style="left:1199px;top:508.5px;width:33px;text-align:center">2</div>
<div class="abs" style="left:1232px;top:501px;width:1px;height:32px;background:#ddd"></div>
<div class="abs td" style="left:1232px;top:508.5px;width:32px;text-align:center">3</div>
<div class="abs" style="left:1264px;top:501px;width:1px;height:32px;background:#ddd"></div>
<div class="abs td" style="left:1264px;top:508.5px;width:33px;text-align:center">4</div>
<div class="abs" style="left:1297px;top:501px;width:1px;height:32px;background:#ddd"></div>
<div class="abs td" style="left:1297px;top:508.5px;width:32px;text-align:center">5</div>
<div class="abs" style="left:1329px;top:501px;width:1px;height:32px;background:#ddd"></div>
<div class="abs td" style="left:1329px;top:508.5px;width:30px;text-align:center">›</div>
</div>
<div class="abs footer"><div class="abs" style="left:1222px;top:12px;font-size:13.2px;line-height:16px;color:#676a6c;white-space:nowrap">© 2020 JAdmins Copyright</div></div>
</body></html>
